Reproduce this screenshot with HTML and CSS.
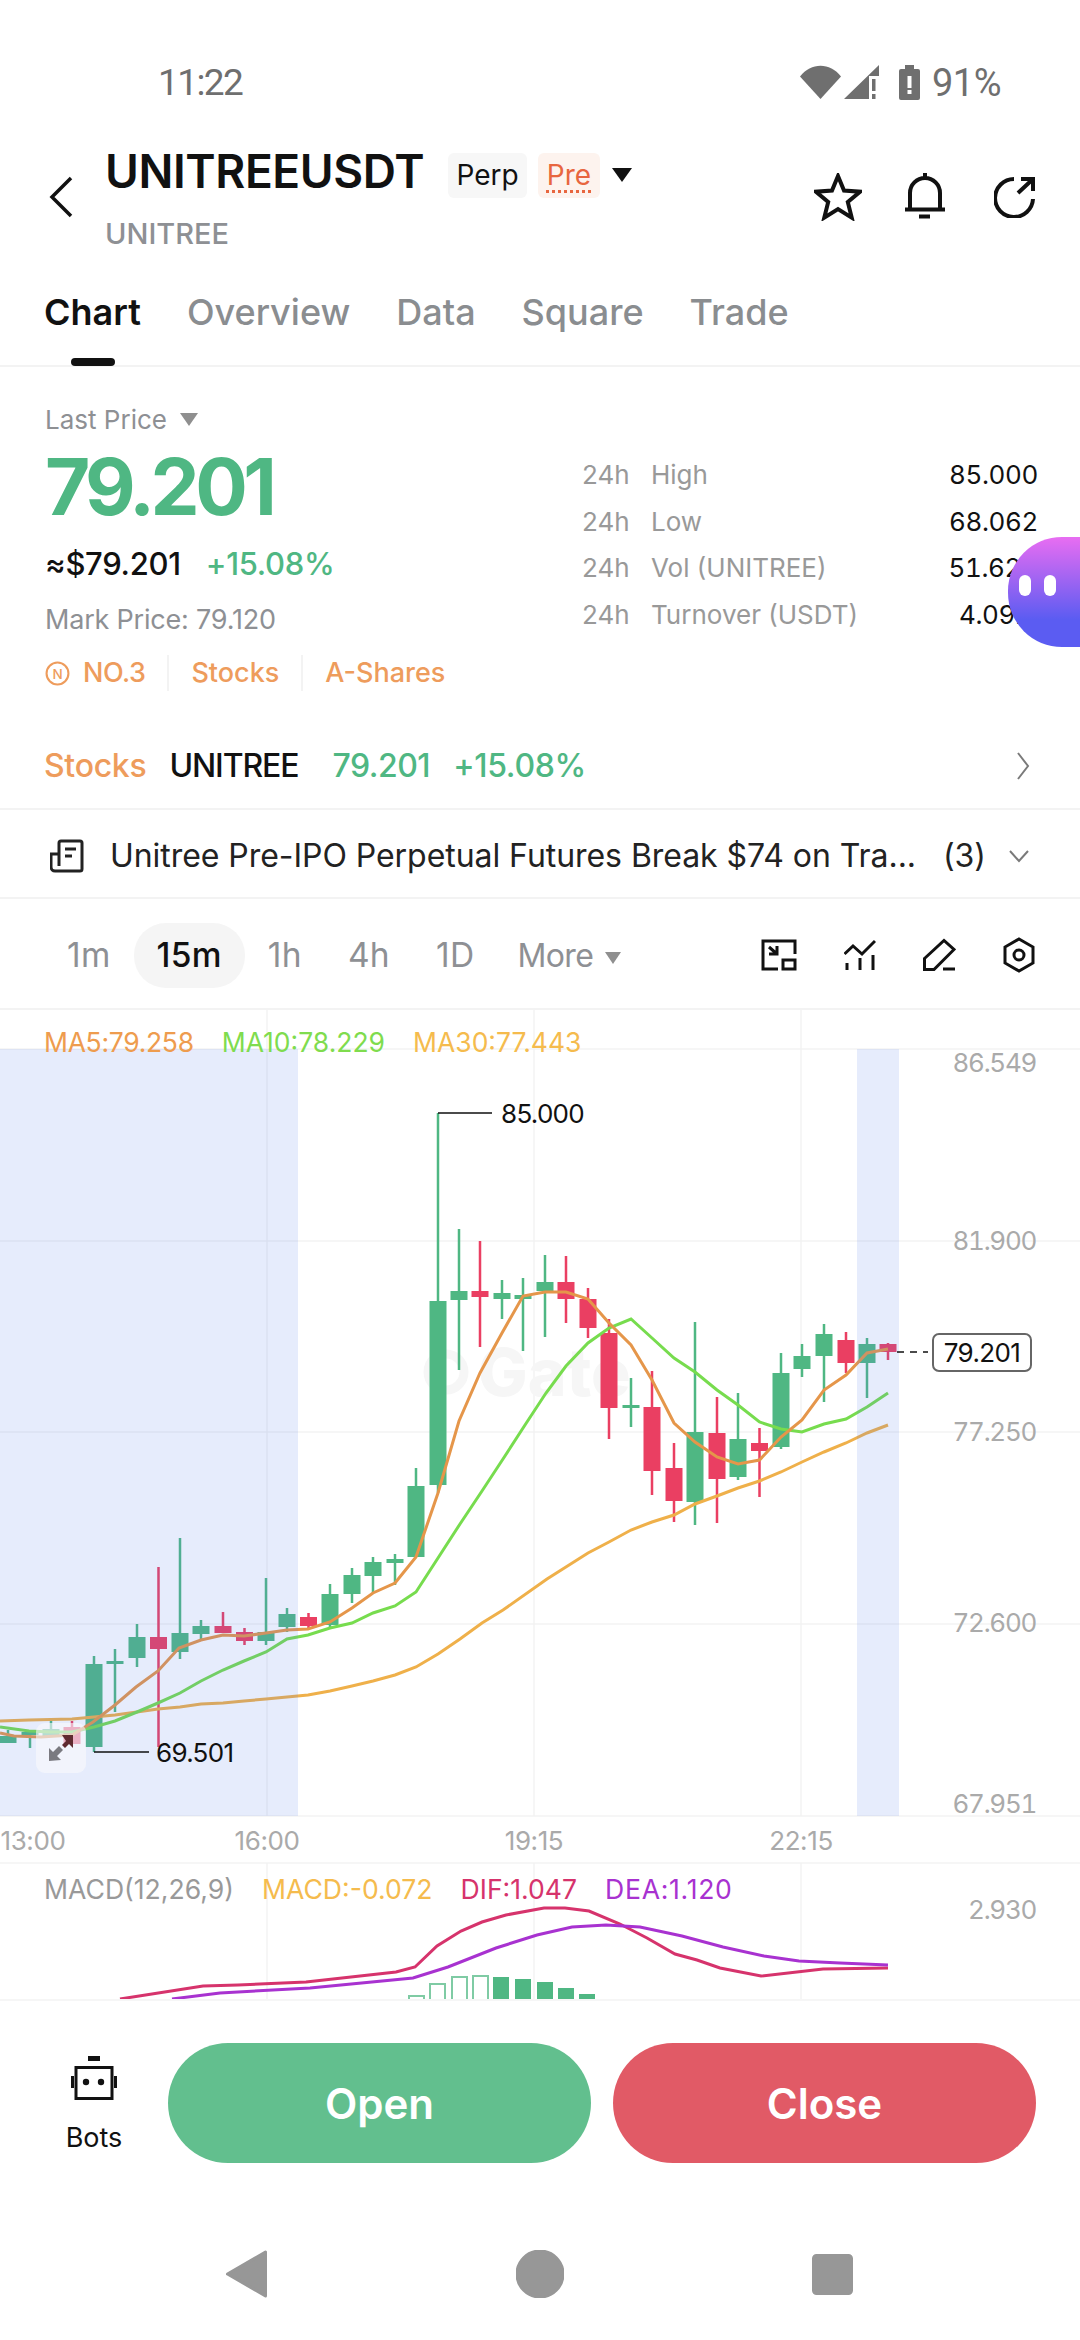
FILE: index.html
```html
<!DOCTYPE html>
<html lang="en">
<head>
  <meta charset="UTF-8" />
  <meta name="viewport" content="width=device-width, initial-scale=1.0"/>
  <title>UNITREEUSDT | Chart</title>
  <link rel="stylesheet" href="styles.css">
</head>
<body>
  <div class="status">
    <span class="clock">11:22</span>
    <div class="status-right">
      <svg class="s-wifi" viewBox="0 0 41 34"><path d="M0 11.500C11-3 30-3 41 11.500L20.500 34z"/></svg>
      <svg class="s-signal" viewBox="0 0 35 34"><path d="M0 34L35 0V11H25V34z"/><path d="M28 14h3.500v12H28zM28 29h3.500v5H28z"/></svg>
      <svg class="s-batt" viewBox="0 0 21 35"><path d="M6 0h9v4h4a2 2 0 0 1 2 2v27a2 2 0 0 1-2 2H2a2 2 0 0 1-2-2V6a2 2 0 0 1 2-2h4z"/><path class="s-cut" d="M8.500 11h4v12h-4zM8.500 25h4v4h-4z"/></svg>
      <span class="batt-text">91%</span>
    </div>
  </div>

  <header class="head">
    <svg class="back" viewBox="0 0 24 42"><path d="M22 2L3 21l19 19"/></svg>
    <div class="head-title">
      <div class="title-row">
        <h1>UNITREEUSDT</h1>
        <span class="tag">Perp</span>
        <span class="tag tag-pre"><u>Pre</u></span>
        <i class="caret caret-black"></i>
      </div>
      <div class="subtitle">UNITREE</div>
    </div>
    <div class="head-icons">
      <svg class="ic-star" viewBox="0 0 48 48"><path d="M24 3l6 14.500 16 1.200-12.200 10.300 3.900 15.600L24 36l-13.700 8.600 3.900-15.600L2 18.700l16-1.200z"/></svg>
      <svg class="ic-bell" viewBox="0 0 40 46"><path d="M0 36.500h40M5 36V20a15 15 0 0 1 30 0v16M20 0v5M14 43.500h11"/></svg>
      <svg class="ic-share" viewBox="0 0 42 42"><path d="M20 3A19 19 0 1 0 39 23M24 17L39 3M27 3h12v12"/></svg>
    </div>
  </header>

  <nav class="tabs">
    <a class="active">Chart</a>
    <a>Overview</a>
    <a>Data</a>
    <a>Square</a>
    <a>Trade</a>
  </nav>

  <section class="stats">
    <div class="stats-left">
      <div class="last-label">Last Price <i class="caret caret-gray"></i></div>
      <div class="last-price">79.201</div>
      <div class="usd-line"><span>≈$79.201</span><span class="green">+15.08%</span></div>
      <div class="mark">Mark Price: 79.120</div>
      <div class="tags">
        <svg class="n-icon" viewBox="0 0 24 24"><circle cx="12" cy="12" r="10.500"/><text x="12" y="17" text-anchor="middle">N</text></svg>
        <span class="rank">NO.3</span>
        <span>Stocks</span>
        <span>A-Shares</span>
      </div>
    </div>
    <div class="stats-right">
      <div class="stat"><span class="h24">24h</span><span class="stat-name">High</span><b>85.000</b></div>
      <div class="stat"><span class="h24">24h</span><span class="stat-name">Low</span><b>68.062</b></div>
      <div class="stat"><span class="h24">24h</span><span class="stat-name">Vol (UNITREE)</span><b>51.62K</b></div>
      <div class="stat"><span class="h24">24h</span><span class="stat-name">Turnover (USDT)</span><b>4.09M</b></div>
    </div>
  </section>

  <div class="bubble"><span></span><span></span></div>

  <div class="stock-row">
    <span class="orange">Stocks</span>
    <span class="stock-name">UNITREE</span>
    <span class="green stock-price">79.201</span>
    <span class="green">+15.08%</span>
    <svg class="chev-right" viewBox="0 0 14 30"><path d="M2 2l10 13L2 28"/></svg>
  </div>

  <div class="news-row">
    <svg class="news-icon" viewBox="0 0 34 34"><path d="M9 27V4a2 2 0 0 1 2-2h19a2 2 0 0 1 2 2v26a2 2 0 0 1-2 2H5a4 4 0 0 1-4-4V15h8M15 10h11M15 17h7"/></svg>
    <span class="news-text">Unitree Pre-IPO Perpetual Futures Break $74 on Tra...</span>
    <span class="news-count">(3)</span>
    <svg class="chev-down" viewBox="0 0 22 14"><path d="M2 2l9 10 9-10"/></svg>
  </div>

  <div class="periods">
    <a>1m</a>
    <a class="active">15m</a>
    <a>1h</a>
    <a>4h</a>
    <a>1D</a>
    <a class="more">More <i class="caret caret-gray"></i></a>
    <div class="period-icons">
      <svg class="pi-wide" viewBox="0 0 36 32"><path d="M17 30H2V2h32v13M22 21h12v9H22zM8 8l8 7M16 7v8H8"/></svg>
      <svg class="pi-line" viewBox="0 0 32 32"><path d="M.5 15L9 7l9 8L31 2M3 24v7M16 19v12M29 16v15"/></svg>
      <svg class="pi-pen" viewBox="0 0 33 33"><path d="M1.500 20L21 2l10 9-20 20H1.500zM20 30.500h12"/></svg>
      <svg class="pi-hex" viewBox="0 0 32 36"><path d="M16 2l14 8v16l-14 8-14-8V10z"/><circle cx="16" cy="18" r="5"/></svg>
    </div>
  </div>

  <div class="chart">
    <svg class="plot" viewBox="0 1010 1080 989">
      <path class="grid" d="M267 1010V1816M534 1010V1816M801 1010V1816M267 1863V1999M534 1863V1999M801 1863V1999M0 1049H1080M0 1241H1080M0 1432H1080M0 1624H1080M0 1816H1080M0 1863H1080"/>
      <circle class="watermark-logo" cx="446" cy="1372" r="18"/>
      <text class="watermark" x="478" y="1396">Gate</text>

      <path class="wick-up" d="M8 1730V1743M30 1732V1748M51 1721V1737M94 1656V1752M115 1649V1712M137 1624V1667M180 1538V1659M201 1620V1640M266 1578V1645M287 1608V1632M330 1584V1628M352 1568V1603M373 1557V1593M395 1554V1585M416 1468V1557M438 1113V1493M459 1229V1370M502 1280V1319M523 1278V1351M545 1255V1337M631 1378V1427M695 1322V1525M738 1393V1480M781 1353V1449M802 1344V1377M824 1324V1402M867 1338V1398"/>
      <path class="wick-down" d="M72 1721V1744M158.500 1567V1747M223 1612V1633M244.500 1628V1645M308.500 1613V1628M480 1241V1347M566 1256V1323M588 1288V1338M609 1319V1439M652 1371V1495M674 1443V1522M717 1397V1523M759.500 1428V1497M846 1332V1373M888 1343V1360"/>
      <path class="body-up" d="M-.5 1736h17v7h-17zM21.500 1732h17v3h-17zM42.500 1729h17v8h-17zM85.500 1664h17v83h-17zM106.500 1661h17v3h-17zM128.500 1637h17v21h-17zM171.500 1633h17v19h-17zM192.500 1626h17v8h-17zM257.500 1632h17v9h-17zM278.500 1614h17v13h-17zM321.500 1594h17v31h-17zM343.500 1575h17v19h-17zM364.500 1562h17v14h-17zM386.500 1559h17v4h-17zM407.500 1486h17v71h-17zM429.500 1301h17v184h-17zM450.500 1291h17v9h-17zM493.500 1293h17v6h-17zM514.500 1295h17v4h-17zM536.500 1282h17v9h-17zM622.500 1405h17v3h-17zM686.500 1432h17v70h-17zM729.500 1439h17v38h-17zM772.500 1373h17v74h-17zM793.500 1356h17v13h-17zM815.500 1334h17v22h-17zM858.500 1344h17v19h-17z"/>
      <path class="body-down" d="M63.500 1727h17v17h-17zM150 1637h17v12h-17zM214.500 1626h17v7h-17zM236 1632h17v9h-17zM300 1617h17v9h-17zM471.500 1291h17v6h-17zM557.500 1282h17v17h-17zM579.500 1299h17v29h-17zM600.500 1333h17v75h-17zM643.500 1407h17v64h-17zM665.500 1468h17v33h-17zM708.500 1433h17v46h-17zM751 1443h17v8h-17zM837.500 1340h17v23h-17zM879.500 1344h17v8h-17z"/>

      <polyline class="ma30" points="0,1721 29,1720 72,1719 94,1717 115,1715 137,1712 158,1709 180,1707 201,1704 223,1703 244,1701 266,1699 287,1697 308,1695 330,1691 352,1686 373,1681 395,1675 416,1667 438,1654 460,1639 482,1623 503,1610 547,1579 588,1553 609,1542 631,1530 652,1522 674,1515 695,1504 717,1496 738,1488 759.500,1481 781,1472 802,1462 824,1452 846,1443 867,1433 888,1425"/>
      <polyline class="ma10" points="0,1727 29,1731 51,1732 72,1732 94,1727 115,1721 137,1712 158,1703 180,1693 201,1681 223,1670 244,1661 266,1652 287,1639 308,1635 330,1628 352,1623 373,1613 395,1606 416,1592 438,1558 460,1524 482,1491 503,1459 525,1425 546,1393 566,1366 588,1343 609,1328 631,1319 652,1338 674,1358 695,1372 717,1390 738,1405 759.500,1422 781,1429 802,1432 824,1424 846,1419 867,1407 888,1393"/>
      <polyline class="ma5" points="0,1733 14,1736 41,1737 72,1735 93,1722 115,1705 136,1687 158,1671 179,1648 201,1640 223,1635 244,1636 266,1633 287,1630 308,1629 330,1622 352,1608 373,1593 395,1583 416,1557 438,1493 459,1421 480,1373 502,1333 523,1296 545,1292 566,1292 588,1299 609,1323 631,1345 652,1380 674,1423 695,1442 717,1457 738,1464 759.500,1460 781,1437 802,1420 824,1390 846,1375 867,1353 888,1349"/>

      <rect class="session" x="0" y="1049" width="298" height="767"/>
      <rect class="session" x="857" y="1049" width="42" height="767"/>

      <path class="leader" d="M438 1113H492M94 1752H149"/>
      <path class="leader-dash" d="M897 1352H928"/>
      <text class="note" x="501" y="1123">85.000</text>
      <text class="note" x="156" y="1762">69.501</text>

      <g class="axis">
        <text x="1036" y="1072">86.549</text>
        <text x="1036" y="1250">81.900</text>
        <text x="1036" y="1441">77.250</text>
        <text x="1036" y="1632">72.600</text>
        <text x="1036" y="1813">67.951</text>
        <text x="1036" y="1919">2.930</text>
      </g>
      <g class="times">
        <text x="33" y="1850">13:00</text>
        <text x="267" y="1850">16:00</text>
        <text x="534" y="1850">19:15</text>
        <text x="801" y="1850">22:15</text>
      </g>

      <path class="bar-solid" d="M493 1977h16v22h-16zM515 1979h16v20h-16zM537 1982h16v17h-16zM558 1988h16v11h-16zM579 1994h16v5h-16z"/>
      <path class="bar-hollow" d="M409 1999v-3h15v3M430 1999v-15h15v15M452 1999v-22h15v22M473 1999v-23h15v23"/>
      <polyline class="dif" points="120,1999 203,1986 238,1985 306,1982 396,1972 415,1967 437,1946 461,1931 482,1922 506,1915 544,1908 565,1908 589,1911 620,1924 647,1938 675,1954 697,1960 720,1968 761,1976 823,1969 888,1968"/>
      <polyline class="dea" points="172,1999 220,1993 310,1988 413,1978 448,1967 496,1948 537,1935 572,1927 606,1925 640,1927 682,1936 723,1947 764,1956 799,1961 840,1963 888,1965"/>
    </svg>

    <div class="ma-legend">
      <span class="c-ma5">MA5:79.258</span>
      <span class="c-ma10">MA10:78.229</span>
      <span class="c-ma30">MA30:77.443</span>
    </div>
    <div class="macd-legend">
      <span class="c-gray">MACD(12,26,9)</span>
      <span class="c-ma30">MACD:-0.072</span>
      <span class="c-dif">DIF:1.047</span>
      <span class="c-dea">DEA:1.120</span>
    </div>
    <div class="price-tag">79.201</div>
    <div class="zoom-btn">
      <svg viewBox="0 0 30 30"><path class="arrow-a" d="M3 28V15l4 4 6-6 4 4-6 6 4 4z"/><path class="arrow-b" d="M27 2v13l-4-4-4 4-3-3 4-4-4-6z"/></svg>
    </div>
  </div>

  <footer class="bottom">
    <div class="actions">
      <div class="bots">
        <svg viewBox="0 0 46 44"><path class="bot-fill" d="M17 0h12v5H17z"/><path class="bot-line" d="M5 11.500h36v31H5zM1.500 20v12M44.500 20v12"/><circle class="bot-fill" cx="15" cy="26" r="3.200"/><circle class="bot-fill" cx="30" cy="26" r="3.200"/></svg>
        <span>Bots</span>
      </div>
      <button class="btn btn-open">Open</button>
      <button class="btn btn-close">Close</button>
    </div>
    <div class="nav-bar">
      <svg viewBox="0 0 48 48"><path d="M42.500 2v44L4.500 24z"/></svg>
      <svg viewBox="0 0 48 48"><circle cx="24" cy="24" r="23"/></svg>
      <svg viewBox="0 0 48 48"><rect x="4.500" y="5.500" width="38" height="38" rx="3"/></svg>
    </div>
  </footer>
</body>
</html>
```

FILE: styles.css
```css
* {
  box-sizing: border-box;
}

body {
  font-family: Inter, 'Noto Sans', sans-serif;
  background-color: #fff;
  color: #111;
  margin: 0;
  width: 1080px;
  height: 2340px;
  overflow: hidden;
  position: relative;
}

.green { color: #4fb783; }
.orange { color: #ee9c5c; }

.caret {
  display: inline-block;
  width: 0;
  height: 0;
  border-left: 9px solid transparent;
  border-right: 9px solid transparent;
  border-top: 13px solid #8f8f8f;
}

.caret-black { border-top-color: #111; border-left-width: 10px; border-right-width: 10px; border-top-width: 14px; }
.caret-gray { vertical-align: 3px; margin-left: 6px; }

/* status bar */
.status {
  height: 130px;
  padding: 61px 79px 0 158px;
  display: flex;
  justify-content: space-between;
  color: #6f6f6f;
}

.clock, .batt-text {
  font-family: Roboto, sans-serif;
  font-size: 37px;
  letter-spacing: -1.600px;
  line-height: 44px;
}

.batt-text {
  font-size: 38px;
  letter-spacing: -0.5px;
}

.status-right {
  display: flex;
  align-items: flex-start;
  height: 44px;
}

.status-right svg { fill: #6f6f6f; margin-top: 4px; }
.s-wifi { width: 41px; height: 34px; }
.s-signal { width: 35px; height: 34px; margin-left: 3px; }
.s-batt { width: 21px; height: 35px; margin-left: 20px; }
.status-right .s-cut { fill: #fff; }
.batt-text { margin-left: 12px; }

/* header */
.head {
  height: 142px;
  padding: 0 44px 0 49px;
  display: flex;
  position: relative;
}

.back {
  width: 24px;
  height: 42px;
  margin-top: 46px;
  fill: none;
  stroke: #111;
  stroke-width: 3.5;
}

.head-title {
  margin-left: 32px;
  padding-top: 17px;
}

.title-row {
  display: flex;
  align-items: center;
  height: 48px;
}

h1 {
  font-size: 46px;
  font-weight: 600;
  letter-spacing: -0.4px;
  line-height: 48px;
  margin: 0;
  width: 343px;
}

.tag {
  width: 79px;
  height: 45px;
  line-height: 45px;
  text-align: center;
  font-size: 28px;
  background: #f7f7f7;
  border-radius: 6px;
  margin-top: 8px;
}

.tag-pre {
  width: 62px;
  margin-left: 11px;
  background: #fdf3ee;
  color: #e8663f;
}

.tag-pre u {
  text-decoration: underline dotted #e8663f 3px;
  text-underline-offset: 5px;
}

.title-row .caret {
  margin-left: 12px;
  margin-top: 8px;
}

.subtitle {
  font-size: 29px;
  font-weight: 500;
  color: #8e9094;
  margin-top: 21px;
  line-height: 36px;
}

.head-icons {
  margin-left: auto;
  margin-top: 43px;
  display: flex;
  align-items: flex-start;
}

.head-icons svg {
  fill: none;
  stroke: #111;
  stroke-width: 4;
}

.ic-star { width: 48px; height: 48px; margin-top: 0; }
.ic-bell { width: 40px; height: 46px; margin-left: 43px; }
.ic-share { width: 42px; height: 42px; margin-left: 49px; margin-top: 3px; }

/* tabs */
.tabs {
  height: 95px;
  padding: 18px 0 0 44px;
  display: flex;
  gap: 46px;
  border-bottom: 2px solid #f3f3f3;
  font-size: 36px;
  font-weight: 500;
  line-height: 44px;
  color: #8a8d90;
}

.tabs a.active {
  color: #111;
  font-weight: 600;
  position: relative;
}

.tabs a.active::after {
  content: "";
  position: absolute;
  left: 27px;
  bottom: -1px;
  width: 44px;
  height: 8px;
  border-radius: 4px;
  background: #111;
}

/* stats */
.stats {
  height: 353px;
  display: flex;
  padding: 37px 42px 0 45px;
}

.stats-left { width: 537px; }

.last-label {
  font-size: 26px;
  line-height: 32px;
  color: #8e9094;
}

.last-price {
  font-size: 78px;
  font-weight: 700;
  letter-spacing: -4.500px;
  line-height: 84px;
  margin-top: 9px;
  color: #4fb783;
}

.usd-line {
  display: flex;
  gap: 25px;
  font-size: 31px;
  font-weight: 500;
  letter-spacing: -0.3px;
  line-height: 40px;
  margin-top: 15px;
}

.mark {
  font-size: 27px;
  letter-spacing: -0.2px;
  line-height: 36px;
  margin-top: 18px;
  color: #8e9094;
}

.tags {
  display: flex;
  align-items: center;
  font-size: 27px;
  font-weight: 500;
  line-height: 36px;
  margin-top: 17px;
  color: #ee9c5c;
}

.n-icon {
  width: 25px;
  height: 25px;
  margin-right: 13px;
  fill: none;
  stroke: #ee9c5c;
  stroke-width: 2;
}

.n-icon text {
  fill: #ee9c5c;
  stroke: none;
  font-size: 13px;
}

.rank { letter-spacing: -0.5px; }

.tags span + span {
  border-left: 2px solid #f3f3f3;
  margin-left: 22px;
  padding-left: 22px;
}

.stats-right {
  flex: 1;
  padding-top: 48px;
}

.stat {
  display: flex;
  font-size: 26px;
  line-height: 46.700px;
  color: #999;
}

.h24 { width: 69px; }

.stat b {
  margin-left: auto;
  font-weight: 400;
  font-variant-numeric: tabular-nums;
  letter-spacing: -0.4px;
  color: #111;
}

.bubble {
  position: absolute;
  top: 537px;
  right: 0;
  width: 72px;
  height: 110px;
  border-radius: 54px 0 0 54px;
  background: linear-gradient(180deg, #e86df2, #5b5cf2 75%);
  display: flex;
  gap: 13px;
  padding: 38px 0 0 11px;
}

.bubble span {
  width: 12px;
  height: 21px;
  border-radius: 6px;
  background: #fff;
}

/* rows above the chart */
.stock-row {
  height: 90px;
  padding: 3px 50px 0 44px;
  display: flex;
  align-items: center;
  gap: 23px;
  font-size: 32px;
  font-weight: 500;
  letter-spacing: -0.3px;
  border-bottom: 2px solid #f3f3f3;
}

.stock-name { color: #111; letter-spacing: -1.100px; }
.stock-price { margin-left: 11px; letter-spacing: -0.5px; }

.chev-right {
  width: 14px;
  height: 30px;
  margin-left: auto;
  fill: none;
  stroke: #7a7a7a;
  stroke-width: 2;
}

.news-row {
  height: 89px;
  padding: 4px 50px 0 50px;
  display: flex;
  align-items: center;
  font-size: 32px;
  letter-spacing: -0.05px;
  color: #222;
  border-bottom: 2px solid #f3f3f3;
}

.news-icon {
  width: 34px;
  height: 34px;
  flex: none;
  fill: none;
  stroke: #222;
  stroke-width: 3;
}

.news-text { margin-left: 26px; white-space: nowrap; width: 833px; }

.chev-down {
  width: 22px;
  height: 14px;
  margin-left: auto;
  fill: none;
  stroke: #7a7a7a;
  stroke-width: 2;
}

.periods {
  height: 111px;
  padding: 3px 45px 0 44px;
  display: flex;
  align-items: center;
  font-size: 33.500px;
  letter-spacing: 0.3px;
  color: #8e9094;
  border-bottom: 2px solid #f3f3f3;
}

.periods a {
  padding: 0 23px;
  height: 65px;
  line-height: 65px;
  border-radius: 32px;
}

.periods a.active {
  color: #111;
  font-weight: 500;
  background: #f5f5f5;
}

.periods a.more {
  font-size: 32px;
  letter-spacing: -0.6px;
  margin-left: -3px;
}

.more .caret-gray {
  border-left-width: 8px;
  border-right-width: 8px;
  border-top-width: 12px;
  margin-left: 3px;
}

.period-icons {
  margin-left: auto;
  display: flex;
  align-items: center;
  gap: 47px;
}

.period-icons svg {
  height: 36px;
  fill: none;
  stroke: #111;
  stroke-width: 3;
}

.period-icons .pi-wide { width: 36px; }
.period-icons .pi-line { width: 32px; }
.period-icons .pi-pen { width: 33px; }
.period-icons .pi-hex { width: 32px; }

/* chart canvas, the viewBox is in page pixels */
.chart {
  height: 989px;
  position: relative;
  overflow: hidden;
}

.plot {
  display: block;
  width: 1080px;
  height: 989px;
  font-family: Inter, sans-serif;
}

.plot polyline, .plot .grid, .plot .leader, .plot .leader-dash, .plot .bar-hollow, .plot .watermark-logo {
  fill: none;
}

.grid { stroke: #f3f3f3; stroke-width: 1.500; }
.watermark { font-size: 66px; font-weight: 800; fill: #f6f6f6; }
.watermark-logo { stroke: #f6f6f6; stroke-width: 9; }
.wick-up { stroke: #4fb783; stroke-width: 2.500; }
.wick-down { stroke: #ea3f62; stroke-width: 2.500; }
.body-up { fill: #4fb783; }
.body-down { fill: #ea3f62; }
.ma5 { stroke: #e5964a; stroke-width: 3; }
.ma10 { stroke: #77dc4e; stroke-width: 3; }
.ma30 { stroke: #efb04a; stroke-width: 3; }
.dif { stroke: #d6336c; stroke-width: 3; }
.dea { stroke: #a832d0; stroke-width: 3; }
.bar-solid { fill: #4fb783; }
.bar-hollow { stroke: #7fcba4; stroke-width: 2; }
.session { fill: rgba(88, 128, 235, 0.15); }
.leader { stroke: #111; stroke-width: 1.500; }
.leader-dash { stroke: #111; stroke-width: 1.500; stroke-dasharray: 7 6; }
.note { font-size: 26px; letter-spacing: -0.7px; fill: #111; }
.axis text { font-size: 26px; font-variant-numeric: tabular-nums; letter-spacing: -1.300px; fill: #aaa; text-anchor: end; }
.times text { font-size: 26px; letter-spacing: -0.4px; fill: #aaa; text-anchor: middle; }

.ma-legend, .macd-legend {
  position: absolute;
  left: 44px;
  display: flex;
  line-height: 36px;
}

.ma-legend { top: 14px; gap: 28px; font-size: 26.500px; }
.macd-legend { top: 861px; gap: 28px; font-size: 26.600px; }

.c-ma5 { color: #ee9c4e; }
.ma-legend .c-ma5 { letter-spacing: -0.3px; }
.c-ma10 { color: #7fdc4e; }
.c-ma30 { color: #f5bb4d; }
.c-dif { color: #d6336c; }
.c-dea { color: #a832d0; letter-spacing: 0.7px; }
.c-gray { color: #999; }

.price-tag {
  position: absolute;
  left: 932px;
  top: 323px;
  width: 100px;
  height: 39px;
  border: 2px solid #666;
  border-radius: 7px;
  background: #fff;
  text-align: center;
  font-size: 26px;
  letter-spacing: -0.6px;
  line-height: 35px;
}

.zoom-btn {
  position: absolute;
  left: 36px;
  top: 713px;
  width: 50px;
  height: 50px;
  border-radius: 9px;
  background: rgba(250, 250, 252, 0.6);
  padding: 10px;
}

.zoom-btn svg { display: block; width: 30px; height: 30px; }
.arrow-a { fill: #7a7a80; }
.arrow-b { fill: #5f2a30; }

/* bottom bar */
.bottom {
  height: 341px;
  background: #fff;
  border-top: 2px solid #f6f6f6;
}

.actions {
  display: flex;
  gap: 22px;
  padding: 42px 44px 0 32px;
}

.bots {
  width: 124px;
  margin-right: -10px;
  display: flex;
  flex-direction: column;
  align-items: center;
  font-size: 27px;
  padding-top: 13px;
}

.bots svg { width: 46px; height: 44px; margin-bottom: 21px; }
.bot-fill { fill: #111; }
.bot-line { fill: none; stroke: #111; stroke-width: 3; }

.btn {
  flex: 1;
  height: 120px;
  border: none;
  border-radius: 60px;
  font-family: inherit;
  font-size: 42px;
  font-weight: 600;
  color: #fff;
}

.btn-open { background-color: #62bf8e; }
.btn-close { background-color: #e15a66; }

.nav-bar {
  display: flex;
  justify-content: center;
  gap: 245px;
  margin-top: 87px;
}

.nav-bar svg {
  width: 48px;
  height: 48px;
  fill: #979797;
  stroke: #979797;
  stroke-width: 3;
  stroke-linejoin: round;
}
```
